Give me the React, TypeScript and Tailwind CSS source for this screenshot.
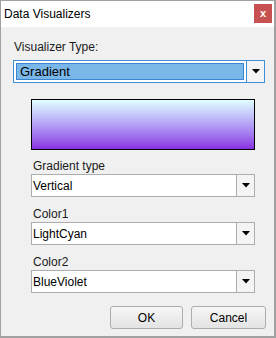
import { ReactNode } from "react";

function Arrow() {
  return (
    <svg width="8" height="5" viewBox="0 0 8 5">
      <path d="M0 0 H8 L4 4.5 Z" fill="#000" />
    </svg>
  );
}

function Combo({ value }: { value: string }) {
  return (
    <div className="flex h-[23px] w-[224px] border border-[#adadad] bg-white">
      <div className="flex flex-1 items-center pl-[1px] text-[12px] text-black">
        {value}
      </div>
      <div className="flex w-[18px] items-center justify-center border-l border-[#adadad] bg-[#f4f4f4]">
        <Arrow />
      </div>
    </div>
  );
}

function Field({ label, children }: { label: string; children: ReactNode }) {
  return (
    <div className="flex flex-col">
      <div className="h-[15px] pl-[2px] text-[12px] leading-[15px] text-[#1a1a1a]">
        {label}
      </div>
      {children}
    </div>
  );
}

function Button({ label, width }: { label: string; width: string }) {
  return (
    <button
      className={`h-[23px] ${width} rounded-[3px] border border-[#adadad] bg-gradient-to-b from-[#f6f6f6] to-[#e3e3e3] text-[12px] text-black`}
    >
      {label}
    </button>
  );
}

export default function App() {
  return (
    <div
      className="flex h-[338px] w-[276px] flex-col border-t border-l border-r-2 border-b-2 border-[#a0a0a0] bg-[#f0f0f0]"
      style={{ fontFamily: '"Liberation Sans", Arial, sans-serif' }}
    >
      <div className="flex h-[26px] items-start justify-between bg-white">
        <div className="pl-[3px] pt-[6px] text-[12px] leading-[14px] text-black">
          Data Visualizers
        </div>
        <div className="mr-[2px] mt-[3px] flex h-[19px] w-[18px] items-center justify-center bg-[#c75050] text-[11px] font-bold leading-none text-white">
          x
        </div>
      </div>

      <div className="flex flex-col px-[12px]">
        <div className="mt-[13px] h-[15px] pl-[1px] text-[12px] leading-[15px] text-[#1a1a1a]">
          Visualizer Type:
        </div>

        <div className="mt-[5px] flex h-[23px] w-[252px] border border-[#3e8ed8] bg-white">
          <div className="flex flex-1 p-[2px]">
            <div className="flex flex-1 items-center border border-[#3a86d2] bg-[#7ab7e9] pl-[3px] text-[13px] text-black">
              Gradient
            </div>
          </div>
          <div className="flex w-[18px] items-center justify-center border-l border-[#3e8ed8] bg-[#f4f4f4]">
            <Arrow />
          </div>
        </div>

        <div className="ml-[18px] flex flex-col">
          <div className="mt-[16px] h-[51px] w-[224px] border border-black bg-gradient-to-b from-[#e0ffff] to-[#8a2be2]" />

          <div className="mt-[9px] flex flex-col gap-[10px]">
            <Field label="Gradient type">
              <Combo value="Vertical" />
            </Field>
            <Field label="Color1">
              <Combo value="LightCyan" />
            </Field>
            <Field label="Color2">
              <Combo value="BlueViolet" />
            </Field>
          </div>
        </div>

        <div className="-mr-[4px] mt-[13px] flex justify-end gap-[8px]">
          <Button label="OK" width="w-[73px]" />
          <Button label="Cancel" width="w-[75px]" />
        </div>
      </div>
    </div>
  );
}
